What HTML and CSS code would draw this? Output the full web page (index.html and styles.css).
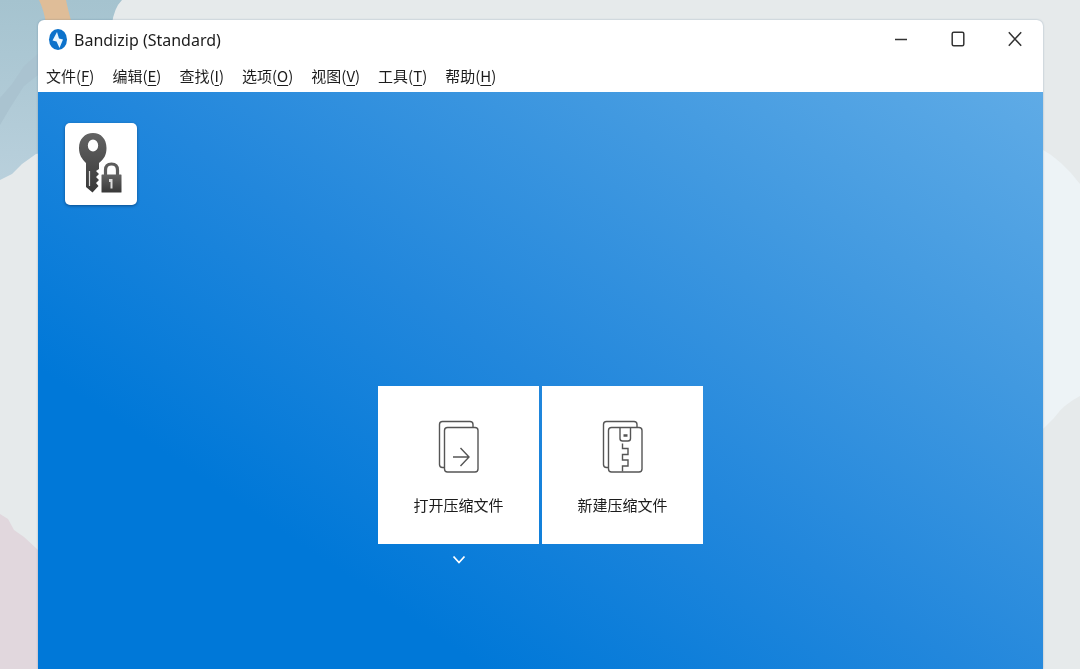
FILE: index.html
```html
<!DOCTYPE html>
<html lang="zh-CN">
<head>
    <meta charset="UTF-8">
    <meta name="viewport" content="width=device-width, initial-scale=1.0">
    <title>Bandizip (Standard)</title>
    <link rel="stylesheet" href="styles.css">
</head>
<body>
    <svg class="wallpaper" viewBox="0 0 1080 669" preserveAspectRatio="none" aria-hidden="true">
        <defs>
            <linearGradient id="paint" x1="0" y1="0" x2="0" y2="1">
                <stop offset="0" stop-color="#a5c3cf"/>
                <stop offset="1" stop-color="#b9d0dc"/>
            </linearGradient>
        </defs>
        <rect width="1080" height="669" fill="#e6eaeb"/>
        <path d="M0 0H122Q114 8 112 24L60 150 36 154 22 164 12 174 0 180Z" fill="url(#paint)"/>
        <path d="M0 98L12 84 24 66 38 54V75L24 86 10 108 0 125Z" fill="#aac3d0"/>
        <path d="M39 0H66Q68 10 72 24H46Q44 10 39 0Z" fill="#dfbd98"/>
        <path d="M0 514L8 519 14 530 24 537 38 550V669H0Z" fill="#e1d7dd"/>
        <path d="M1040 148Q1062 160 1080 184V396Q1064 404 1054 418L1040 432Z" fill="#edf3f6"/>
    </svg>

    <div class="window">
        <header class="title-bar">
            <svg class="app-logo" viewBox="0 0 20 22" aria-hidden="true">
                <ellipse cx="10" cy="10.500" rx="9" ry="10.500" fill="#0c72cb"/>
                <path d="M9 3L4.500 11.500 8.500 12.500 11.500 19 15 10.500 11 9.500Z" fill="#e9f6ff"/>
            </svg>
            <h1>Bandizip (Standard)</h1>
            <div class="window-controls">
                <button type="button" aria-label="最小化">
                    <svg viewBox="0 0 16 18"><path d="M2 9.500H14"/></svg>
                </button>
                <button type="button" aria-label="最大化">
                    <svg viewBox="0 0 16 18"><rect x="2.200" y="2.200" width="11.600" height="13.600" rx="1.500"/></svg>
                </button>
                <button type="button" aria-label="关闭">
                    <svg viewBox="0 0 16 18"><path d="M1.800 2.200L14.200 15.800M14.200 2.200L1.800 15.800"/></svg>
                </button>
            </div>
        </header>

        <nav class="menu-bar">
            <button type="button">文件(<u>F</u>)</button>
            <button type="button">编辑(<u>E</u>)</button>
            <button type="button">查找(<u>I</u>)</button>
            <button type="button">选项(<u>O</u>)</button>
            <button type="button">视图(<u>V</u>)</button>
            <button type="button">工具(<u>T</u>)</button>
            <button type="button">帮助(<u>H</u>)</button>
        </nav>

        <main class="content">
            <button class="password-button" type="button" aria-label="密码管理器">
                <svg viewBox="0 0 46 62">
                    <defs>
                        <linearGradient id="metal" x1="0" y1="0" x2="0" y2="1">
                            <stop offset="0" stop-color="#636363"/>
                            <stop offset="1" stop-color="#383838"/>
                        </linearGradient>
                    </defs>
                    <path fill="url(#metal)" fill-rule="evenodd" d="M15 0C7 0 1 6 1 15C1 22 4 26 8 30V54L14.500 59.500 20.500 53 18 50 21 47 18 44 21 41 18 38 21 36V30C26 26 28.500 22 28.500 15C28.500 6 23 0 15 0ZM15 6.500A5 5.800 0 0 1 15 18.500A5 5.800 0 0 1 15 6.500Z"/>
                    <path d="M11.500 38V53" stroke="#dddddd" stroke-width="1.200"/>
                    <path d="M27.500 45V37Q27.500 31 33.500 31T39.500 37V45" fill="none" stroke="#5c5c5c" stroke-width="3.200"/>
                    <rect x="23.500" y="41.500" width="20" height="18" rx="0.500" fill="url(#metal)"/>
                    <path d="M31 46H34.500V55.500H32.500V49H31Z" fill="#dddddd"/>
                </svg>
            </button>

            <div class="tiles">
                <button class="tile" type="button">
                    <svg viewBox="0 0 42 54">
                        <path d="M6 47.500H4.500Q1.500 47.500 1.500 44.500V4.500Q1.500 1.500 4.500 1.500H32Q35 1.500 35 4.500V7"/>
                        <rect x="6.500" y="7.500" width="33.500" height="44.500" rx="3"/>
                        <path d="M15 37H31M22.500 28L31 37 22.500 46"/>
                    </svg>
                    <span>打开压缩文件</span>
                </button>
                <button class="tile" type="button">
                    <svg viewBox="0 0 42 54">
                        <path d="M6 47.500H4.500Q1.500 47.500 1.500 44.500V4.500Q1.500 1.500 4.500 1.500H32Q35 1.500 35 4.500V7"/>
                        <rect x="6.500" y="7.500" width="33.500" height="44.500" rx="3"/>
                        <path d="M18 7.500V18.500Q18 21 20.500 21H26Q28.500 21 28.500 18.500V7.500M20.500 51.500V46H26V40H20.500V34.500H26V28.500H20.500V23.500"/>
                        <path d="M21.500 15.500H25.500" stroke-width="2.500"/>
                    </svg>
                    <span>新建压缩文件</span>
                </button>
                <button class="recent-button" type="button" aria-label="最近打开的文件">
                    <svg viewBox="0 0 14 10"><path d="M1.500 1.500L7 7.500 12.500 1.500"/></svg>
                </button>
            </div>
        </main>
    </div>
</body>
</html>
```

FILE: styles.css
```css
* {
    margin: 0;
    padding: 0;
    box-sizing: border-box;
}

body {
    min-height: 100vh;
    display: flex;
    padding: 20px 37px 0 38px;
    background: #e6eaeb;
    color: #1c1c1c;
    font-family: "Noto Sans", "Noto Sans CJK SC", sans-serif;
}

button {
    border: none;
    background: none;
    color: inherit;
    font: inherit;
    cursor: pointer;
}

svg {
    display: block;
}

/* Desktop behind the window */
.wallpaper {
    position: fixed;
    top: 0;
    left: 0;
    width: 100%;
    height: 100%;
    z-index: -1;
}

.window {
    flex: 1;
    display: flex;
    flex-direction: column;
    background: white;
    border-radius: 6px 6px 0 0;
    overflow: hidden;
    box-shadow: 0 0 2px rgba(40, 80, 120, 0.4);
}

.title-bar {
    display: flex;
    align-items: center;
    height: 40px;
    padding-left: 10px;
}

.app-logo {
    width: 20px;
    height: 22px;
    margin-right: 6px;
}

.title-bar h1 {
    font-size: 16px;
    font-weight: 400;
}

.window-controls {
    display: flex;
    align-self: flex-start;
    margin-left: auto;
}

.window-controls button {
    display: flex;
    justify-content: center;
    align-items: center;
    width: 57px;
    height: 38px;
}

.window-controls svg {
    width: 16px;
    height: 18px;
    fill: none;
    stroke: #333333;
    stroke-width: 1.5;
}

.menu-bar {
    display: flex;
    align-items: center;
    gap: 18px;
    height: 32px;
    padding: 0 8px;
    font-family: "Noto Sans CJK SC", sans-serif;
    font-size: 15px;
    line-height: 24px;
}

.menu-bar u {
    text-underline-offset: 3px;
}

.content {
    flex: 1;
    padding: 31px 27px 20px;
    background: linear-gradient(34deg, #0078d8 24%, #2287dc 50%, #4199e0 75%, #5fabe6 100%);
}

.password-button {
    display: flex;
    justify-content: center;
    align-items: center;
    width: 72px;
    height: 82px;
    background: white;
    border-radius: 5px;
    box-shadow: 0 1px 3px rgba(0, 30, 70, 0.5);
}

.password-button svg {
    width: 46px;
    height: 62px;
}

.tiles {
    display: grid;
    grid-template-columns: 161px 161px;
    justify-content: center;
    column-gap: 3px;
    margin-top: 181px;
}

.tile {
    display: flex;
    flex-direction: column;
    align-items: center;
    gap: 19px;
    height: 158px;
    padding-top: 34px;
    background: white;
    font-family: "Noto Sans CJK SC", sans-serif;
    font-size: 15px;
    line-height: 24px;
}

.tile svg {
    width: 42px;
    height: 54px;
    fill: none;
    stroke: #555555;
    stroke-width: 1.4;
}

.recent-button {
    display: flex;
    justify-content: center;
    align-items: center;
    height: 32px;
}

.recent-button svg {
    width: 14px;
    height: 10px;
    fill: none;
    stroke: white;
    stroke-width: 1.8;
}
```
